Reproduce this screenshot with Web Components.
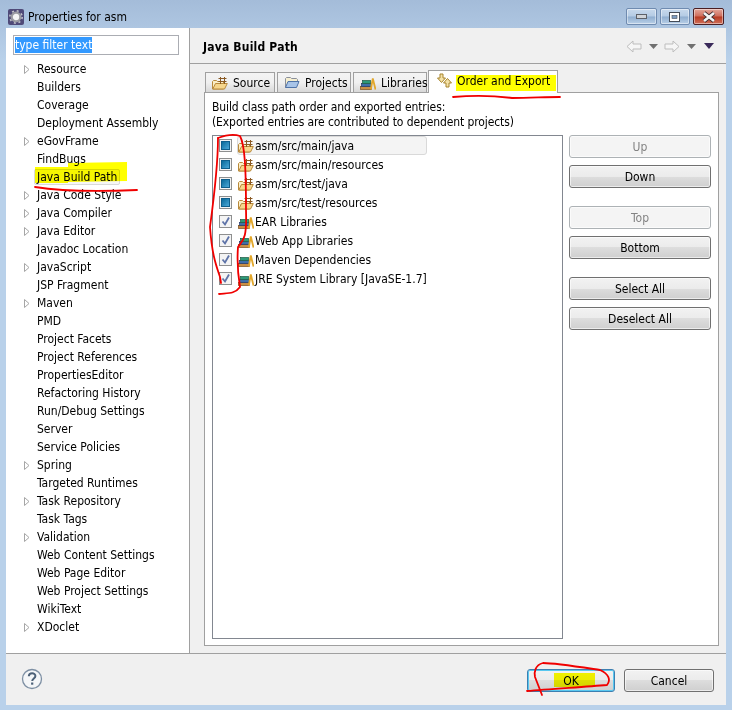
<!DOCTYPE html>
<html><head><meta charset="utf-8"><style>html,body{margin:0;padding:0;background:#b9d1ea}body{font:12px "DejaVu Sans Condensed","DejaVu Sans",sans-serif;font-stretch:condensed;color:#000}</style></head><body>
<prop-dialog title="Properties for asm">
<pref-tree slot="tree"></pref-tree>
<build-path slot="page"></build-path>
</prop-dialog>
<script>
const F='font:12px "DejaVu Sans Condensed","DejaVu Sans",sans-serif;font-stretch:condensed;';
const ICONS={
src:`<svg width="16" height="16" viewBox="0 0 16 16"><path d="M.5 14V6.500l1-1h3l1 1h6v7.500z" fill="#fbeec6" stroke="#b98a3c"/><path d="M.8 14 3.500 8.500h11.800L12.500 14z" fill="#f6d68c" stroke="#b98a3c"/><path d="M8.500 2v7M12.500 2v7M6.500 3.500h8M6.500 6.500h8" stroke="#8a5a24" fill="none"/></svg>`,
folder:`<svg width="16" height="16" viewBox="0 0 16 16"><path d="M1.500 12.500v-9l1-1h4l1 1h5l1 1v2" fill="#f6efd0" stroke="#8a8f9a"/><path d="M1.500 12.500 4 6.500h11l-2.500 6z" fill="#a8c4e8" stroke="#4f73a8"/></svg>`,
lib:`<svg width="16" height="16" viewBox="0 0 16 16"><rect x=".5" y="11.500" width="11" height="3" fill="#c98f45" stroke="#7a4f1e" stroke-width=".7"/><rect x="1.500" y="8.500" width="10" height="3" fill="#3e6fa8" stroke="#24396a" stroke-width=".7"/><rect x="2.500" y="5.500" width="8" height="3" fill="#2e9a78" stroke="#1f5a44" stroke-width=".7"/><path d="M10.800 14.500 12.800 3.500l2.700 11" fill="none" stroke="#e2a72c" stroke-width="1.800"/></svg>`,
order:`<svg width="18" height="16" viewBox="0 0 18 16"><path d="M4 1h3v4h2.500L5.500 9.500 1.500 5H4z" fill="#f4e2a8" stroke="#a8842c"/><path d="M13 14h-3v-4H7.500l4-4.500 4 4.500H13z" fill="#f4e2a8" stroke="#a8842c"/></svg>`,
help:`<svg width="22" height="22" viewBox="0 0 22 22"><circle cx="11" cy="11" r="9.500" fill="#f4f6f8" stroke="#7d8fa3" stroke-width="1.300"/><path d="M7.800 8.300c.2-4 6.600-4 6.600-.2 0 2.400-3.200 2.500-3.200 5" fill="none" stroke="#4c6178" stroke-width="2"/><rect x="10.100" y="14.500" width="2.200" height="2.200" fill="#4c6178"/></svg>`,
gear:`<svg width="16" height="16" viewBox="0 0 16 16"><rect width="16" height="16" rx="2" fill="#4f4a78"/><circle cx="8" cy="8" r="4.300" fill="#f4f4f6" stroke="#9a9aa2" stroke-width="2.200"/><circle cx="8" cy="8" r="6.200" fill="none" stroke="#c4c4ca" stroke-width="1.500" stroke-dasharray="2 2.870"/></svg>`
};
function def(name,css,html,init){customElements.define(name,class extends HTMLElement{connectedCallback(){if(this.shadowRoot)return;const s=this.attachShadow({mode:'open'});const h=typeof html==='function'?html(this):html;s.innerHTML='<style>'+css+'</style>'+h;init&&init(this,s)}})}

def('x-icon',':host{display:inline-flex;flex:none}svg{display:block}',el=>ICONS[el.getAttribute('name')]);

def('win-controls',`:host{display:flex;gap:3px;align-items:flex-start}
.b{height:17px;box-sizing:border-box;border:1px solid #6f8bb0;border-radius:2px;display:flex;align-items:center;justify-content:center;background:linear-gradient(#c8d9ec,#b4cbe4 48%,#8fadcf 52%,#b9d0e8);box-shadow:inset 0 0 0 1px rgba(255,255,255,.45)}
.min{width:31px}.max{width:30px}.close{width:31px;border-color:#4a1e22;background:linear-gradient(#e3a79b,#cf6d5c 48%,#b73a22 52%,#d0705a);}
`,`<div class="b min"><svg width="12" height="7"><rect x=".5" y="1.500" width="10" height="4" fill="#cfd3d8" stroke="#5c6068"/></svg></div>
<div class="b max"><svg width="12" height="10"><rect x=".5" y=".5" width="10" height="9" fill="#fff" stroke="#444c58"/><rect x="3" y="3.500" width="5" height="3" fill="#7d9cc0" stroke="#444c58" stroke-width=".6"/></svg></div>
<div class="b close"><svg width="16" height="12"><path d="M3 2l10 8M13 2 3 10" stroke="#3c2b2e" stroke-width="4.200"/><path d="M3 2l10 8M13 2 3 10" stroke="#f4f4f4" stroke-width="2.700"/></svg></div>`);

def('prop-dialog',`:host{display:flex;flex-direction:column;width:732px;height:710px;box-sizing:border-box;padding:0 6px 5px;background:linear-gradient(#a4bcd9,#b9d1ea 60px);position:relative;overflow:hidden}
.title{height:28px;box-sizing:border-box;padding-top:5px;flex:none;display:flex;align-items:center;gap:4px;margin-left:2px;${F}}
.ctl{margin-left:auto;align-self:flex-start;margin-top:3px;margin-right:2px;}
.main{flex:1;display:flex;min-height:0;background:#f0f0f0}
.left{width:183px;flex:none;background:#fff;border-right:1px solid #a0a0a0;display:flex;flex-direction:column}
.right{flex:1;min-width:0;display:flex;flex-direction:column}
.foot{height:52px;box-sizing:border-box;flex:none;border-top:1px solid #a0a0a0;background:#f0f0f0;display:flex;align-items:center;padding:2px 12px 0 15px;gap:9px}
.foot x-icon{margin-top:-3px}
.sp{flex:1}`,el=>`<div class="title"><x-icon name="gear"></x-icon><span>${el.getAttribute('title')}</span><win-controls class="ctl"></win-controls></div>
<div class="main"><div class="left"><slot name="tree"></slot></div><div class="right"><slot name="page"></slot></div></div>
<div class="foot"><x-icon name="help"></x-icon><div class="sp"></div><x-btn w="88" def>OK</x-btn><x-btn w="90">Cancel</x-btn></div><scribble-layer></scribble-layer>`);

def('x-btn',`:host{display:block}
.b{box-sizing:border-box;height:23px;border:1px solid #707070;border-radius:3px;background:linear-gradient(#f2f2f2,#ebebeb 50%,#dddddd 50%,#cfcfcf);display:flex;align-items:center;justify-content:center;${F}box-shadow:inset 0 0 0 1px rgba(255,255,255,.6)}
.b.off{background:#f4f4f4;border-color:#adb2b5;color:#838383}
.b.def{border-color:#3c7fb1;box-shadow:inset 0 0 0 1px #58c8f0}`,
el=>`<div class="b ${el.hasAttribute('off')?'off':''} ${el.hasAttribute('def')?'def':''}" style="width:${el.getAttribute('w')||142}px"><slot></slot></div>`);

def('tree-item',`:host{display:flex;height:18px;align-items:center;${F}padding-left:18px;white-space:nowrap;box-sizing:border-box}
.t{width:13px;flex:none;display:flex;justify-content:flex-start}
.s{padding:0 2px;margin-left:-2px;border-radius:2px;border:1px solid transparent;margin-right:-1px;margin-left:-3px;line-height:14px}
:host([sel]) .s{border-color:#d9d9d9;background:#f6f6f6}`,
el=>`<span class="t">${el.hasAttribute('open')?'<svg width="6" height="9"><path d="M.5.5 5 4.500.5 8.500z" fill="#fff" stroke="#a6a6a6"/></svg>':''}</span><span class="s"><slot></slot></span>`);

def('pref-tree',`:host{display:flex;flex-direction:column;padding:7px 8px 0 0;${F}}
.f{height:20px;box-sizing:border-box;border:1px solid #abadb3;margin-left:7px;width:166px;padding:1px 1px;display:flex;align-items:center}
.f span{background:#3399ff;color:#fff;line-height:16px}
.l{margin-top:5px;display:flex;flex-direction:column}`,()=>{
const items=[['Resource',1],['Builders'],['Coverage'],['Deployment Assembly'],['eGovFrame',1],['FindBugs'],['Java Build Path',0,1],['Java Code Style',1],['Java Compiler',1],['Java Editor',1],['Javadoc Location'],['JavaScript',1],['JSP Fragment'],['Maven',1],['PMD'],['Project Facets'],['Project References'],['PropertiesEditor'],['Refactoring History'],['Run/Debug Settings'],['Server'],['Service Policies'],['Spring',1],['Targeted Runtimes'],['Task Repository',1],['Task Tags'],['Validation',1],['Web Content Settings'],['Web Page Editor'],['Web Project Settings'],['WikiText'],['XDoclet',1]];
return `<div class="f"><span>type filter text</span></div><div class="l">`+items.map(i=>`<tree-item ${i[1]?'open':''} ${i[2]?'sel':''}>${i[0]}</tree-item>`).join('')+`</div>`});

def('x-tab',`:host{display:block;margin-right:2px;align-self:flex-end}
.t{height:20px;box-sizing:border-box;border:1px solid #a0a0a0;border-bottom:0;background:linear-gradient(#f4f4f4,#f0f0f0 50%,#d8d8d8);display:flex;align-items:center;gap:5px;padding:0 4px 0 6px;white-space:nowrap;${F}}
:host([on]){margin-right:0;position:relative;margin-bottom:-1px;margin-left:-1px}
:host([on]) .t{height:23px;background:#fff;padding:0 5px 3px 7px;gap:3px}`,el=>`<div class="t" style="width:${el.getAttribute('w')}px"><x-icon name="${el.getAttribute('icon')}"></x-icon><slot></slot></div>`);

def('entry-row',`:host{display:flex;height:19px;align-items:center;${F}padding-left:6px;white-space:nowrap}
.c{width:13px;height:13px;box-sizing:border-box;border:1px solid #8e8f8f;background:#f4f4f4;display:flex;align-items:center;justify-content:center;flex:none}
.c i{display:block;width:9px;height:9px;background:linear-gradient(135deg,#0a6a9a,#4aa8d8);border:1px solid #0f5f8c;box-sizing:border-box}
.lb{display:flex;align-items:center;gap:1px;height:19px;border-radius:3px;box-sizing:border-box;border:1px solid transparent;margin-left:5px}
:host([sel]) .lb{background:#f4f4f4;border-color:#d9d9d9;width:190px}`,
el=>{const g=el.hasAttribute('grey');return `<span class="c">${g?'<svg width="11" height="11"><path d="M2.500 5.500 5 8.500 9 1.500" fill="none" stroke="#5e73a8" stroke-width="1.800"/></svg>':'<i></i>'}</span><span class="lb"><x-icon name="${g?'lib':'src'}"></x-icon><slot></slot></span>`});

def('build-path',`:host{display:flex;flex-direction:column;height:100%;${F}}
.hd{height:36px;flex:none;box-sizing:border-box;border-bottom:1px solid #a0a0a0;display:flex;align-items:center;padding:3px 12px 0 13px;gap:0}
.hd b{font-size:12px;letter-spacing:.2px}
.nav{margin-left:auto;margin-top:-2px;display:flex;align-items:center}
.tabs{display:flex;height:21px;margin:7px 0 0 15px;flex:none;position:relative;align-items:flex-end}
.panel{flex:1;margin:0 7px 7px 14px;border:1px solid #a0a0a0;background:#fff;padding:7px 7px 6px 7px;display:flex;flex-direction:column;min-height:0}
.d{line-height:15px;height:30px;margin-bottom:5px;letter-spacing:-.1px}
.cols{flex:1;display:flex;gap:6px;min-height:0}
.list{flex:1;border:1px solid #828790;background:#fff}
.side{width:142px;flex:none;display:flex;flex-direction:column;gap:7px}
.gap{height:4px}`,`<div class="hd"><b>Java Build Path</b><span class="nav">
<svg width="16" height="13" style="margin-right:7px"><path d="M7 1 1 6.500 7 12V9h8V4H7z" fill="#f6f6f6" stroke="#bdbdbd"/></svg>
<svg width="9" height="5" style="margin-right:6px"><path d="M0 0h9L4.500 5z" fill="#707070"/></svg>
<svg width="16" height="13" style="margin-right:7px"><path d="M9 1l6 5.500L9 12V9H1V4h8z" fill="#f6f6f6" stroke="#bdbdbd"/></svg>
<svg width="9" height="5" style="margin-right:8px"><path d="M0 0h9L4.500 5z" fill="#707070"/></svg>
<svg width="10" height="6"><path d="M0 0h10L5 6z" fill="#3a2a5a"/></svg></span></div>
<div class="tabs"><x-tab icon="src" w="70">Source</x-tab><x-tab icon="folder" w="74">Projects</x-tab><x-tab icon="lib" w="74">Libraries</x-tab><x-tab icon="order" w="130" on>Order and Export</x-tab></div>
<div class="panel"><div class="d">Build class path order and exported entries:<br>(Exported entries are contributed to dependent projects)</div>
<div class="cols"><div class="list">
<entry-row sel>asm/src/main/java</entry-row><entry-row>asm/src/main/resources</entry-row><entry-row>asm/src/test/java</entry-row><entry-row>asm/src/test/resources</entry-row>
<entry-row grey>EAR Libraries</entry-row><entry-row grey>Web App Libraries</entry-row><entry-row grey>Maven Dependencies</entry-row><entry-row grey>JRE System Library [JavaSE-1.7]</entry-row></div>
<div class="side"><x-btn off>Up</x-btn><x-btn>Down</x-btn><div class="gap"></div><x-btn off>Top</x-btn><x-btn>Bottom</x-btn><div class="gap"></div><x-btn>Select All</x-btn><x-btn>Deselect All</x-btn></div></div></div>`);

def('scribble-layer',`:host{position:absolute;left:0;top:0;width:732px;height:710px;pointer-events:none}svg{position:absolute;left:0;top:0}.y{mix-blend-mode:multiply}`,
`<svg width="732" height="710" class="y"><g fill="#ffff00"><path d="M35 167h33v-4l59-1v19l-59 1v1H35z"/><rect x="456" y="75" width="100" height="16"/><rect x="554" y="673" width="41" height="14"/></g></svg>
<svg width="732" height="710" fill="none" stroke="#f00000" stroke-width="1.800" stroke-linecap="round" stroke-linejoin="round">
<path d="M35 187C60 191 90 192 137 190"/><path d="M453 97C475 95 490 95 512 98 530 98 545 97 560 97"/>
<path d="M218 138C226 135 234 134 240 136 245 145 246 170 246 210 247 240 243 240 238 247 237 260 238 275 240 287 235 294 228 293 219 294"/>
<path d="M218 138C218 165 215 190 210 227 212 255 216 265 220 277L221 283"/>
<path d="M527 691C550 689 583 687 607 685 611 680 609 674 600 670 580 667 555 663 543 663 535 665 534 672 535 677L542 695"/></svg>`);
</script></body></html>
